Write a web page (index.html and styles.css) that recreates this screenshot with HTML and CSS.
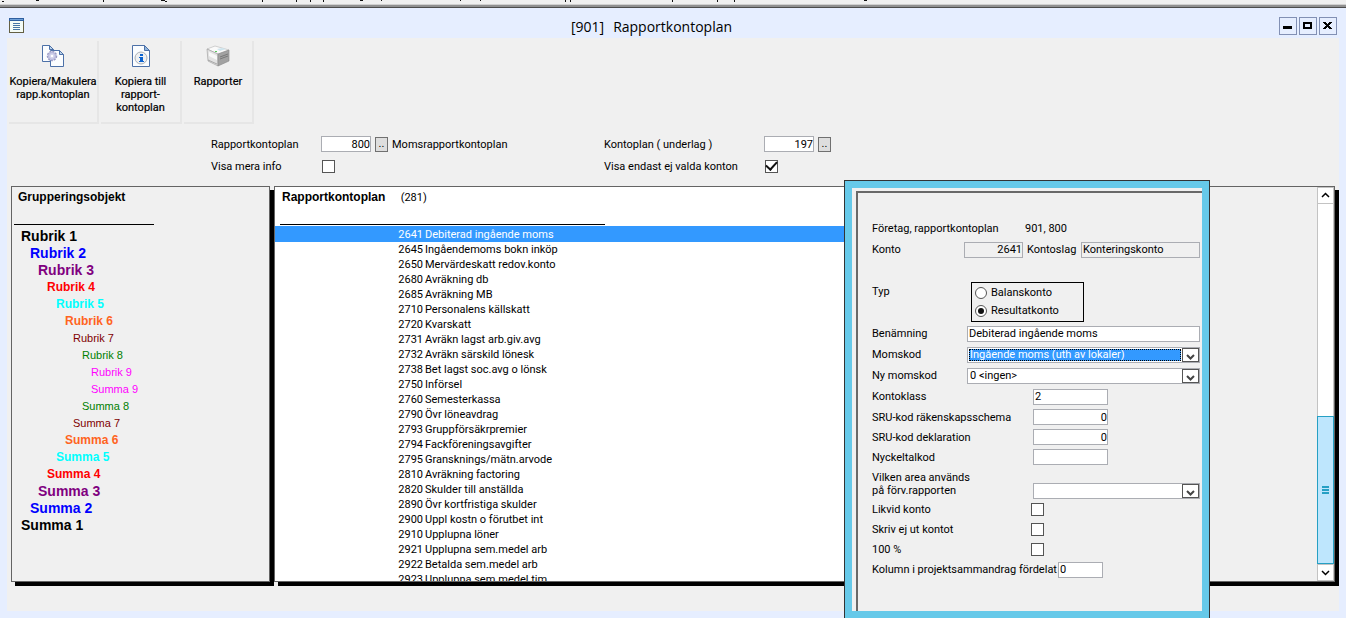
FILE: index.html
```html
<!DOCTYPE html>
<html lang="sv">
<head>
<meta charset="utf-8">
<title>Rapportkontoplan</title>
<link rel="stylesheet" href="styles.css">
</head>
<body>
<div class="top-strip">
  <svg width="900" height="4" viewBox="0 0 900 4" aria-hidden="true"><path d="M2 1h2v1h-2zM36 0h3v1h-3zM103 0h1v2h-1zM161 0h4v1h-4zM165 1h2v1h-2zM262 0h1v2h-1zM296 0h1v2h-1zM310 0h1v2h-1zM323 0h1v2h-1zM360 0h3v1h-3zM381 0h1v1h-1zM460 0h1v1h-1zM480 0h1v1h-1zM565 0h1v2h-1zM570 0h1v2h-1zM672 0h1v2h-1zM717 0h1v2h-1zM734 0h1v2h-1zM864 0h3v1h-3z" fill="#111"/></svg>
</div>
<div class="window">
  <header class="titlebar">
    <svg class="app-icon" width="15" height="15" viewBox="0 0 15 15" aria-hidden="true"><rect x=".5" y=".5" width="14" height="14" fill="#f4fbf6" stroke="#646044"/><path d="M0 0h15v3H0z" fill="#2f5f9f"/><path d="M1 1h13v1H1z" fill="#6fa0d8"/><path d="M4 5.500h7M4 7.500h7M4 9.500h7M4 11.500h7" stroke="#4775a5"/></svg>
    <h1 class="title"><span>[901]</span><span>Rapportkontoplan</span></h1>
    <div class="win-buttons">
      <button type="button" aria-label="Minimera"><svg width="16" height="16" viewBox="0 0 16 16"><path d="M3 8h9v3H3z"/></svg></button>
      <button type="button" aria-label="Maximera"><svg width="16" height="16" viewBox="0 0 16 16"><path fill-rule="evenodd" d="M3 4h9v7H3zM5 6v3h5V6z"/></svg></button>
      <button type="button" aria-label="Stäng"><svg width="16" height="16" viewBox="0 0 16 16"><path d="M3 4h3v1h1v1h1V5h1V4h3v1h-1v1h-1v1H9v1h1v1h1v1h1v1H9v-1H8V9H7v1H6v1H3v-1h1V9h1V8h1V7H5V6H4V5H3z"/></svg></button>
    </div>
  </header>
  <main class="client">
    <nav class="toolbar">
      <button type="button" class="tool tool-a">
        <svg width="24" height="24" viewBox="0 0 24 24" aria-hidden="true"><g fill="#fbfdff" stroke="#4d71a8"><path d="M1.500 1.500h7l4 4v12h-11z"/><path d="M8.500 1.500v4h4z" fill="#b9d2ea"/><path d="M9.500 6.500h9l4 4v12h-13z"/><path d="M18.500 6.500v4h4z" fill="#b9d2ea"/></g><circle cx="11" cy="12" r="4.500" fill="#d8d8ee" stroke="#9a9bc4" stroke-width="1.500" stroke-dasharray="2 1"/><circle cx="11" cy="12" r="3.500" fill="#d0d1ea" stroke="#b4b5da"/><circle cx="11" cy="12" r="1.300" fill="#fff"/></svg>
        <span>Kopiera/Makulera<br>rapp.kontoplan</span>
      </button>
      <button type="button" class="tool tool-b">
        <svg width="24" height="24" viewBox="0 0 24 24" aria-hidden="true"><path d="M3.500 1.500h12l5 5v16h-17z" fill="#fbfdff" stroke="#4d71a8"/><path d="M15.500 1.500v5h5z" fill="#8fb4dc" stroke="#4d71a8"/><circle cx="12" cy="14" r="6" fill="#eef0f2" stroke="#aab0b8"/><path d="M11 10h3v2h-3zM10 13h4v4h1v1h-5v-1h1v-3h-1z" fill="#0b62cf"/></svg>
        <span>Kopiera till<br>rapport-<br>kontoplan</span>
      </button>
      <button type="button" class="tool tool-c">
        <svg width="24" height="24" viewBox="0 0 24 24" aria-hidden="true"><path d="M1 5l8-3 14 4-11 4z" fill="#fafafa" stroke="#b5b5b5" stroke-width=".6"/><path d="M1 5l11 5v12L2 17z" fill="#e2e2e2" stroke="#999" stroke-width=".6"/><path d="M12 10l11-4v11l-11 5z" fill="#a2a2a2" stroke="#888" stroke-width=".6"/><path d="M14 13l8-3M14 15l8-3" stroke="#666" stroke-width=".7"/><path d="M3 8l8 4v4l-8-4z" fill="#f8f8f8"/><path d="M2 16l9 4" stroke="#999" stroke-width=".8"/><path d="M11 5l5-1 4 1-6 2z" fill="#cfe5ee"/><path d="M9 7h2v1H9z" fill="#57c95b"/></svg>
        <span>Rapporter</span>
      </button>
    </nav>

    <section class="filters">
      <div class="filter">
        <label for="rkp">Rapportkontoplan</label>
        <input id="rkp" class="num" type="text" value="800">
        <button type="button" class="pick" aria-label="Välj rapportkontoplan">..</button>
        <span>Momsrapportkontoplan</span>
        <label for="mera">Visa mera info</label>
        <input id="mera" type="checkbox">
      </div>
      <div class="filter">
        <label for="kpl">Kontoplan ( underlag )</label>
        <input id="kpl" class="num" type="text" value="197">
        <button type="button" class="pick" aria-label="Välj kontoplan">..</button>
        <span></span>
        <label for="valda">Visa endast ej valda konton</label>
        <input id="valda" type="checkbox" checked>
      </div>
    </section>

    <div class="panes">
      <section class="pane groups">
        <h2>Grupperingsobjekt</h2>
        <ul>
          <li class="l1">Rubrik 1</li><li class="l2">Rubrik 2</li><li class="l3">Rubrik 3</li>
          <li class="l4">Rubrik 4</li><li class="l5">Rubrik 5</li><li class="l6">Rubrik 6</li>
          <li class="l7">Rubrik 7</li><li class="l8">Rubrik 8</li><li class="l9">Rubrik 9</li>
          <li class="l9">Summa 9</li><li class="l8">Summa 8</li><li class="l7">Summa 7</li>
          <li class="l6">Summa 6</li><li class="l5">Summa 5</li><li class="l4">Summa 4</li>
          <li class="l3">Summa 3</li><li class="l2">Summa 2</li><li class="l1">Summa 1</li>
        </ul>
      </section>
      <section class="pane plan">
        <div class="accounts">
          <h2>Rapportkontoplan <span>(281)</span></h2>
          <table>
            <tbody>
              <tr class="selected"><td>2641</td><td>Debiterad ingående moms</td></tr>
              <tr><td>2645</td><td>Ingåendemoms bokn inköp</td></tr>
              <tr><td>2650</td><td>Mervärdeskatt redov.konto</td></tr>
              <tr><td>2680</td><td>Avräkning db</td></tr>
              <tr><td>2685</td><td>Avräkning MB</td></tr>
              <tr><td>2710</td><td>Personalens källskatt</td></tr>
              <tr><td>2720</td><td>Kvarskatt</td></tr>
              <tr><td>2731</td><td>Avräkn lagst arb.giv.avg</td></tr>
              <tr><td>2732</td><td>Avräkn särskild lönesk</td></tr>
              <tr><td>2738</td><td>Bet lagst soc.avg o lönsk</td></tr>
              <tr><td>2750</td><td>Införsel</td></tr>
              <tr><td>2760</td><td>Semesterkassa</td></tr>
              <tr><td>2790</td><td>Övr löneavdrag</td></tr>
              <tr><td>2793</td><td>Gruppförsäkrpremier</td></tr>
              <tr><td>2794</td><td>Fackföreningsavgifter</td></tr>
              <tr><td>2795</td><td>Gransknings/mätn.arvode</td></tr>
              <tr><td>2810</td><td>Avräkning factoring</td></tr>
              <tr><td>2820</td><td>Skulder till anställda</td></tr>
              <tr><td>2890</td><td>Övr kortfristiga skulder</td></tr>
              <tr><td>2900</td><td>Uppl kostn o förutbet int</td></tr>
              <tr><td>2910</td><td>Upplupna löner</td></tr>
              <tr><td>2921</td><td>Upplupna sem.medel arb</td></tr>
              <tr><td>2922</td><td>Betalda sem.medel arb</td></tr>
              <tr><td>2923</td><td>Upplupna sem.medel tim</td></tr>
            </tbody>
          </table>
        </div>
        <div class="backdrop"></div>
        <div class="scrollbar">
          <button type="button" aria-label="Rulla upp"><svg width="15" height="15" viewBox="0 0 15 15"><path d="M4 9l3.500-3.500L11 9" fill="none" stroke="#000" stroke-width="1.500"/></svg></button>
          <div class="track"><div class="thumb"><i></i><i></i><i></i></div></div>
          <button type="button" aria-label="Rulla ned"><svg width="15" height="15" viewBox="0 0 15 15"><path d="M4 6l3.500 3.500L11 6" fill="none" stroke="#000" stroke-width="1.500"/></svg></button>
        </div>
      </section>
    </div>
  </main>

  <form class="dialog">
    <div class="sheet">
      <div class="row"><span class="wide">Företag, rapportkontoplan</span><span>901, 800</span></div>
      <div class="row konto">
        <label for="konto">Konto</label><input id="konto" class="num" type="text" value="2641" readonly>
        <label for="slag">Kontoslag</label><input id="slag" type="text" value="Konteringskonto" readonly>
      </div>
      <div class="row typ">
        <span class="name">Typ</span>
        <div class="radios" role="radiogroup" aria-label="Typ">
          <label><input type="radio" name="typ">Balanskonto</label>
          <label><input type="radio" name="typ" checked>Resultatkonto</label>
        </div>
      </div>
      <div class="row"><label class="name" for="ben">Benämning</label><input id="ben" class="fill" type="text" value="Debiterad ingående moms"></div>
      <div class="row"><label class="name" for="moms">Momskod</label>
        <div class="combo active"><select id="moms"><option>Ingående moms (uth av lokaler)</option></select><span class="arrow"><svg width="15" height="13" viewBox="0 0 15 13"><path d="M4 6l3.500 3.500L11 6" fill="none" stroke="#444" stroke-width="2"/></svg></span></div></div>
      <div class="row"><label class="name" for="ny">Ny momskod</label>
        <div class="combo"><select id="ny"><option>0 &lt;ingen&gt;</option></select><span class="arrow"><svg width="15" height="13" viewBox="0 0 15 13"><path d="M4 6l3.500 3.500L11 6" fill="none" stroke="#444" stroke-width="2"/></svg></span></div></div>
      <div class="row"><label class="mid" for="klass">Kontoklass</label><input id="klass" class="short" type="text" value="2"></div>
      <div class="row low"><label class="mid" for="sru1">SRU-kod räkenskapsschema</label><input id="sru1" class="short num" type="text" value="0"></div>
      <div class="row low"><label class="mid" for="sru2">SRU-kod deklaration</label><input id="sru2" class="short num" type="text" value="0"></div>
      <div class="row low"><label class="mid" for="nyck">Nyckeltalkod</label><input id="nyck" class="short" type="text"></div>
      <div class="row area"><label class="mid" for="area">Vilken area används<br>på förv.rapporten</label>
        <div class="combo"><select id="area"><option></option></select><span class="arrow"><svg width="15" height="13" viewBox="0 0 15 13"><path d="M4 6l3.500 3.500L11 6" fill="none" stroke="#444" stroke-width="2"/></svg></span></div></div>
      <div class="row low"><label class="check" for="likvid">Likvid konto</label><input id="likvid" type="checkbox"></div>
      <div class="row low"><label class="check" for="skriv">Skriv ej ut kontot</label><input id="skriv" type="checkbox"></div>
      <div class="row low"><label class="check" for="hundra">100 %</label><input id="hundra" type="checkbox"></div>
      <div class="row long"><label for="kol">Kolumn i projektsammandrag fördelat</label><input id="kol" class="tiny" type="text" value="0"></div>
    </div>
  </form>
</div>
</body>
</html>
```
FILE: styles.css
```css
* { box-sizing: border-box; }
html, body { height: 100%; }
body {
  margin: 0;
  display: flex;
  flex-direction: column;
  overflow: hidden;
  background: #f0f0f0;
  color: #000;
  font: 11px/13px Roboto, "Liberation Sans", sans-serif;
}
h1, h2, ul { margin: 0; padding: 0; font-weight: normal; }
ul { list-style: none; }
svg { display: block; }
button, input, select { font: inherit; color: inherit; margin: 0; padding: 0; border-radius: 0; }

.top-strip { flex: none; height: 8px; overflow: hidden; border-bottom: 1px solid #4c4c4c; box-shadow: inset 0 -2px #909090, inset 0 -3px #d0d0d0; }
.window { position: relative; flex: 1; min-height: 0; display: flex; flex-direction: column; padding: 0 7px 7px; background: #e6eeff; }

.titlebar { flex: none; display: flex; align-items: center; height: 30px; padding: 5px 2px 0; }
.title { flex: 1; display: flex; justify-content: center; gap: 9px; padding: 2px 0 0; font: 14px/20px "Open Sans", "Noto Sans", sans-serif; }
.win-buttons { display: flex; gap: 2px; }
.win-buttons button { width: 18px; height: 18px; border: 1px solid #8290b4; background: #e6eeff; }

.client { flex: 1; min-height: 0; display: flex; flex-direction: column; background: #f0f0f0; padding: 3px 4px 25px 1px; }
.toolbar { flex: none; display: flex; gap: 2px; padding-left: 1px; }
.tool { display: flex; flex-direction: column; align-items: center; gap: 7px; height: 83px; padding: 3px 0 0; border: solid #e6e6e6; border-width: 0 2px 2px 0; background: none; line-height: 13px; white-space: nowrap; -webkit-text-stroke: .2px #000; }
.tool-a { width: 90px; }
.tool-b { width: 81px; }
.tool-c { width: 70px; }

.filters { flex: none; display: flex; padding: 11px 0 11px 203px; gap: 12px; }
.filter { display: grid; grid-template-columns: 106px 50px 13px 1fr; align-items: center; column-gap: 4px; row-gap: 4px; width: 381px; grid-auto-rows: 18px; }
.filter + .filter { grid-template-columns: 156px 50px 13px 1fr; }
.filter label { white-space: nowrap; }

input[type="text"] { height: 16px; padding: 0 1px; border: 1px solid #abadb3; background: #fff; line-height: 14px; min-width: 0; }
input.num { text-align: right; padding: 0; }
input[type="text"][readonly] { background: #f0f0f0; }
.pick { height: 15px; border: 1px solid #707070; background: #dedede; line-height: 12px; }
input[type="checkbox"] { appearance: none; display: grid; place-items: center; width: 13px; height: 13px; margin-left: 1px; border: 1px solid #555; background: #fff; }
input[type="checkbox"]:checked::before { content: ""; width: 9px; height: 5px; margin-bottom: 3px; border: solid #111; border-width: 0 0 2px 2px; transform: rotate(-48deg); }

.panes { flex: 1; min-height: 0; display: grid; grid-template-columns: 259px 1fr; gap: 4px; padding: 0 0 4px 3px; }
.pane { border: 1px solid #646464; box-shadow: 4px 4px #000; background: #f0f0f0; overflow: hidden; min-height: 0; }
.pane h2 { font: bold 12px/20px "Liberation Sans", Arial, sans-serif; height: 38px; border-bottom: 1px solid #000; }
.groups h2 { width: 140px; margin-left: 2px; padding-left: 4px; }
.groups ul { padding: 3px 0 0 9px; font: 11px/17px "Liberation Sans", Arial, sans-serif; }
.groups .l1, .groups .l2, .groups .l3 { font-size: 14px; font-weight: bold; }
.groups .l4, .groups .l5, .groups .l6 { font-size: 12px; font-weight: bold; }
.groups .l1 { color: #000; }
.groups .l2 { color: #00f; padding-left: 9px; }
.groups .l3 { color: #800080; padding-left: 17px; }
.groups .l4 { color: #f00; padding-left: 26px; }
.groups .l5 { color: #0ff; padding-left: 35px; }
.groups .l6 { color: #ff641e; padding-left: 44px; }
.groups .l7 { color: #800000; padding-left: 52px; }
.groups .l8 { color: #008000; padding-left: 61px; }
.groups .l9 { color: #f0f; padding-left: 70px; }

.plan { display: flex; }
.accounts { flex: 1; min-width: 0; background: #fff; }
.accounts h2 { width: 325px; margin: 0 0 1px 5px; padding-left: 2px; }
.accounts h2 span { font: 11px/20px Roboto, sans-serif; margin-left: 12px; }
.accounts table { width: 100%; border-collapse: collapse; line-height: 15px; }
.accounts td { padding: 0 0 0 2px; height: 15px; white-space: nowrap; }
.accounts td:first-child { width: 148px; padding: 0; text-align: right; }
.accounts .selected { background: #39f; color: #fff; }
.accounts .selected td { height: 16px; padding-top: 1px; }
.backdrop { width: 473px; }
.scrollbar { width: 17px; display: flex; flex-direction: column; border: solid #c3c3c3; border-width: 0 1px; background: #fff; }
.scrollbar button { height: 17px; border: solid #c3c3c3; border-width: 1px 0; background: #fff; }
.track { flex: 1; display: flex; flex-direction: column; justify-content: flex-end; }
.thumb { height: 41%; margin: 0 -1px; display: flex; flex-direction: column; align-items: center; justify-content: center; gap: 1px; border: 1px solid #26a0c4; background: #bee6fd; }
.thumb i { width: 7px; height: 2px; background: #26a0c4; }

.dialog { position: absolute; top: 172px; right: 136px; bottom: 0; display: flex; width: 366px; padding: 10px 7px 7px; border: solid #333; border-width: 1px 1px 0; background: #66c9e9; }
.dialog::before { content: ""; width: 4px; background: #f0f0f0; box-shadow: 0 -3px #f0f0f0; }
.sheet { flex: 1; min-width: 0; padding: 25px 2px 0 14px; background: #f0f0f0; border: solid #696969; border-width: 2px 0 0 2px; box-shadow: 0 -3px #f0f0f0; }
.row { display: flex; align-items: center; height: 21px; white-space: nowrap; }
.row.low { height: 20px; }
.row > .name { width: 95px; }
.row > .wide { width: 153px; }
.row > .mid { width: 161px; }
.row > .check { width: 158px; }
.row.long { gap: 1px; }
.konto { display: grid; grid-template-columns: 88px 59px 50px 1fr; column-gap: 4px; }
.row.typ { height: 63px; }
.typ .radios { margin: 20px 0 0 4px; width: 113px; height: 40px; border: 1px solid #000; padding: 1px 3px; }
.radios label { display: flex; align-items: center; gap: 4px; height: 18px; }
input[type="radio"] { appearance: none; display: grid; place-items: center; width: 12px; height: 12px; border: 1px solid #555; border-radius: 50%; background: #fff; }
input[type="radio"]:checked::before { content: ""; width: 6px; height: 6px; border-radius: 50%; background: #111; }
.fill { flex: 1; }
.short { width: 75px; }
.tiny { width: 45px; }
.row.area { height: 32px; align-items: flex-end; }
.row.area > label { padding-bottom: 2px; }
.combo { flex: 1; min-width: 0; display: flex; height: 16px; border: 1px solid #abadb3; background: #fff; }
.combo select { appearance: none; flex: 1; min-width: 0; border: 0; padding: 0 2px; background: #fff; line-height: 14px; height: 14px; }
.combo.active select { margin: 1px; height: 12px; padding: 0; background: #39f; color: #fff; border: 1px dotted #000; line-height: 10px; }
.arrow { width: 17px; border: 1px solid #555; background: #fff; }
```
